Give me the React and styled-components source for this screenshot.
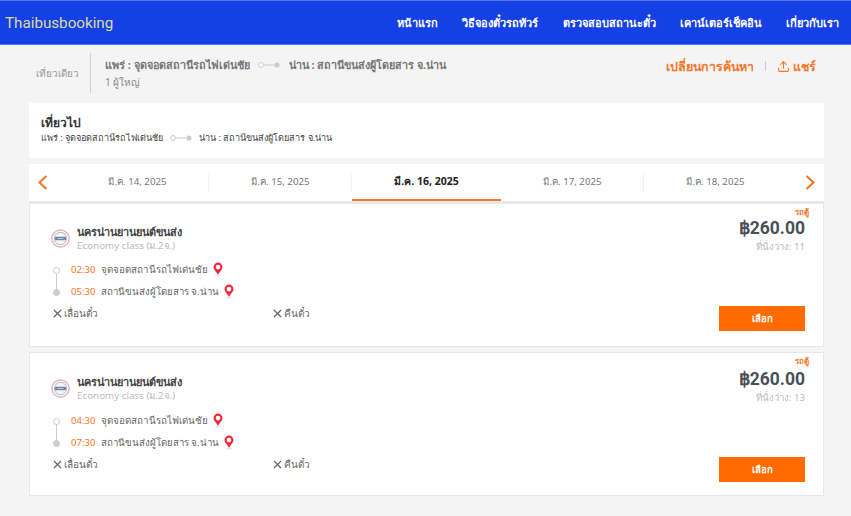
import React from "react";
import styled, { createGlobalStyle } from "styled-components";
import { Upload, X } from "lucide-react";

const GlobalStyle = createGlobalStyle`
  html, body { margin: 0; padding: 0; background: #f4f4f4; }
  body { font-family: "Noto Sans", "Liberation Sans", sans-serif; }
`;

const Page = styled.div`
  width: 851px;
  height: 516px;
  overflow: hidden;
  background: #f4f4f4;
`;

const Header = styled.header`
  height: 45px;
  box-sizing: border-box;
  display: flex;
  align-items: center;
  justify-content: space-between;
  padding: 0 12px 0 5px;
  background: #1540e6;
  border-top: 1px solid #5c78ee;
  border-bottom: 1px solid #5c78ee;
`;

const Logo = styled.div`
  font-family: "Roboto", sans-serif;
  font-size: 15.2px;
  color: #d9dc9c;
`;

const Nav = styled.nav`
  display: flex;
  gap: 24.25px;
  font-size: 11px;
  font-weight: 700;
  color: #fff;
`;

const Summary = styled.div`
  height: 58px;
  box-sizing: border-box;
  display: flex;
  justify-content: space-between;
  padding: 9px 35px 0 36px;
`;

const SummaryLeft = styled.div`
  display: flex;
  align-items: flex-start;
`;

const TripType = styled.div`
  width: 54px;
  height: 40px;
  margin-top: -1px;
  line-height: 40px;
  font-size: 10px;
  color: #999;
  border-right: 1px solid #c6d0d8;
  margin-right: 14px;
`;

const RouteLine = styled.div`
  display: flex;
  align-items: center;
  gap: ${(p) => p.$gap || 6}px;
  height: ${(p) => p.$height || 22}px;
  font-size: ${(p) => p.$size || 10}px;
  font-weight: ${(p) => p.$weight || 400};
  color: ${(p) => p.$color || "#777"};
`;

const Passengers = styled.div`
  margin-top: -1px;
  font-size: 10px;
  color: #888;
  line-height: 14px;
`;

const Connector = styled.svg`
  flex: none;
  width: 24px;
  height: 8px;
`;

const Actions = styled.div`
  display: flex;
  align-items: center;
  height: 24px;
  font-size: 12.4px;
  font-weight: 700;
  color: #f5772a;
`;

const ActionDivider = styled.span`
  width: 1px;
  height: 10px;
  margin: 0 11px;
  background: #ccc;
`;

const ShareIcon = styled(Upload)`
  width: 13px;
  height: 13px;
  margin-right: 3px;
`;

const Content = styled.main`
  width: 795px;
  margin-left: 29px;
`;

const TripPanel = styled.section`
  height: 55px;
  box-sizing: border-box;
  padding: 12px 12px 0;
  background: #fff;
`;

const TripTitle = styled.div`
  font-size: 12px;
  font-weight: 700;
  line-height: 15px;
  color: #333;
`;

const DateBar = styled.div`
  height: 39px;
  box-sizing: border-box;
  margin-top: 6px;
  display: flex;
  align-items: stretch;
  background: #fff;
  border-bottom: 2px solid #e8e8e8;
`;

const Arrow = styled.div`
  width: 37px;
  flex: none;
  display: flex;
  align-items: center;
  justify-content: ${(p) => (p.$right ? "flex-end" : "flex-start")};
  padding: 0 9px;
  box-sizing: border-box;
`;

const DateTabs = styled.div`
  flex: 1;
  display: flex;
`;

const DateTab = styled.div`
  flex: none;
  width: ${(p) => (p.$active ? 149 : 143)}px;
  box-sizing: border-box;
  display: flex;
  align-items: center;
  justify-content: center;
  height: 37px;
  padding-bottom: 2px;
  font-size: ${(p) => (p.$active ? 10.5 : 9.7)}px;
  font-weight: ${(p) => (p.$active ? 700 : 400)};
  color: ${(p) => (p.$active ? "#222" : "#777")};
  background: ${(p) =>
    p.$divider ? "linear-gradient(#eef0f2, #eef0f2) right center / 1px 18px no-repeat" : "none"};
  box-shadow: ${(p) => (p.$active ? "inset 0 -2px 0 #f5772a" : "none")};
`;

const Card = styled.article`
  height: ${(p) => p.$height}px;
  box-sizing: border-box;
  margin-bottom: 5px;
  padding: 3px 18px 0 21px;
  display: flex;
  justify-content: space-between;
  background: #fff;
  border: 1px solid #e8e8e8;
`;

const CardLeft = styled.div`
  padding-top: ${(p) => 17 + p.$shift}px;
`;

const Operator = styled.div`
  display: flex;
  align-items: center;
  gap: 7px;
  height: 28px;
`;

const OperatorName = styled.div`
  font-size: 10.9px;
  font-weight: 700;
  line-height: 14px;
  color: #444;
`;

const ClassName = styled.div`
  font-size: 9.8px;
  line-height: 13px;
  color: #bbb;
`;

const Stops = styled.div`
  position: relative;
  margin-top: ${(p) => 6 + p.$shift}px;
  padding-left: 20px;
`;

const StopLine = styled.span`
  position: absolute;
  left: 5px;
  top: 12px;
  width: 1px;
  height: 20px;
  background: #ccc;
`;

const StopDot = styled.span`
  position: absolute;
  left: 2px;
  top: ${(p) => p.$top}px;
  width: 7px;
  height: 7px;
  box-sizing: border-box;
  border-radius: 50%;
  border: 1px solid #ccc;
  background: ${(p) => (p.$filled ? "#ccc" : "#fff")};
`;

const Stop = styled.div`
  display: flex;
  align-items: center;
  gap: 5px;
  height: 22.5px;
  font-size: ${(p) => p.$size}px;
  color: #666;
`;

const StopTime = styled.span`
  font-size: 9.6px;
  color: #f5772a;
`;

const Policies = styled.div`
  display: flex;
  height: 22px;
  align-items: center;
  margin-top: -1px;
  font-size: 10px;
  color: #666;
`;

const Policy = styled.div`
  width: 220px;
  display: flex;
  align-items: center;
`;

const CardRight = styled.div`
  display: flex;
  flex-direction: column;
  align-items: flex-end;
`;

const Vehicle = styled.div`
  font-size: 8px;
  font-weight: 700;
  line-height: 10px;
  margin-right: -4px;
  color: #f5772a;
`;

const Price = styled.div`
  margin-top: ${(p) => p.$shift}px;
  font-family: "Roboto", sans-serif;
  font-size: 17.5px;
  font-weight: 700;
  line-height: 23px;
  color: #4a5058;
`;

const Seats = styled.div`
  font-size: 9.7px;
  line-height: 14px;
  color: #bbb;
`;

const SelectButton = styled.button`
  width: 86px;
  height: 25px;
  margin-top: 52px;
  padding: 0;
  border: none;
  background: #ff6b00;
  color: #fff;
  font-family: inherit;
  font-size: 9.5px;
  font-weight: 700;
`;

function RouteConnector({ color = "#ccc" }) {
  return (
    <Connector viewBox="0 0 24 8">
      <circle cx="4" cy="4" r="2.5" fill="#fff" stroke={color} />
      <path d="M7 4h13" stroke={color} />
      <circle cx="20" cy="4" r="2.5" fill={color} />
    </Connector>
  );
}

function DateArrow({ right }) {
  return (
    <svg width="10" height="15" viewBox="0 0 10 15">
      <path
        d={right ? "M1.5 1l7 6.5-7 6.5" : "M8.5 1l-7 6.5 7 6.5"}
        fill="none"
        stroke="#f5772a"
        strokeWidth="2.2"
      />
    </svg>
  );
}

function LogoMark() {
  return (
    <svg width="19" height="19" viewBox="0 0 19 19">
      <circle cx="9.5" cy="9.5" r="8.6" fill="#fff" stroke="#e8b2b6" strokeWidth="1.5" />
      <circle cx="9.5" cy="9.5" r="6.2" fill="#f3f5f8" stroke="#aab6c8" />
      <rect x="4" y="7.8" width="11" height="3.4" rx="1" fill="#6f83a6" />
      <path d="M6.5 9.5h6" stroke="#dfe5ee" strokeWidth="0.7" />
    </svg>
  );
}

function Pin() {
  return (
    <svg width="10" height="15" viewBox="0 0 10 15">
      <ellipse cx="5" cy="13.4" rx="3" ry="1" fill="#e4e4e4" />
      <path
        d="M5 .6A4.5 4.5 0 0 0 .5 5.1C.5 7.8 3.5 10 5 12.8 6.5 10 9.5 7.8 9.5 5.1A4.5 4.5 0 0 0 5 .6Z"
        fill="#ee2a3c"
      />
      <circle cx="5" cy="5.1" r="2.3" fill="#fff" />
    </svg>
  );
}

const dates = ["มี.ค. 14, 2025", "มี.ค. 15, 2025", "มี.ค. 16, 2025", "มี.ค. 17, 2025", "มี.ค. 18, 2025"];
const navItems = ["หน้าแรก", "วิธีจองตั๋วรถทัวร์", "ตรวจสอบสถานะตั๋ว", "เคาน์เตอร์เช็คอิน", "เกี่ยวกับเรา"];
const trips = [
  { depart: "02:30", arrive: "05:30", seats: 11, height: 144, headShift: 0, bodyShift: 0, priceShift: 0 },
  { depart: "04:30", arrive: "07:30", seats: 13, height: 144, headShift: 1, bodyShift: 1, priceShift: 2 },
];

export default function App() {
  return (
    <Page>
      <GlobalStyle />
      <Header>
        <Logo>Thaibusbooking</Logo>
        <Nav>
          {navItems.map((item) => (
            <span key={item}>{item}</span>
          ))}
        </Nav>
      </Header>
      <Summary>
        <SummaryLeft>
          <TripType>เที่ยวเดียว</TripType>
          <div>
            <RouteLine $weight={700} $size={10.8} $gap={7.5} $color="#777">
              แพร่ : จุดจอดสถานีรถไฟเด่นชัย
              <RouteConnector />
              น่าน : สถานีขนส่งผู้โดยสาร จ.น่าน
            </RouteLine>
            <Passengers>1 ผู้ใหญ่</Passengers>
          </div>
        </SummaryLeft>
        <Actions>
          เปลี่ยนการค้นหา
          <ActionDivider />
          <ShareIcon />
          แชร์
        </Actions>
      </Summary>
      <Content>
        <TripPanel>
          <TripTitle>เที่ยวไป</TripTitle>
          <RouteLine $size={9.1} $height={15} $color="#444">
            แพร่ : จุดจอดสถานีรถไฟเด่นชัย
            <RouteConnector />
            น่าน : สถานีขนส่งผู้โดยสาร จ.น่าน
          </RouteLine>
        </TripPanel>
        <DateBar>
          <Arrow>
            <DateArrow />
          </Arrow>
          <DateTabs>
            {dates.map((date, i) => (
              <DateTab key={date} $active={i === 2} $divider={i !== 2 && i !== 4}>
                {date}
              </DateTab>
            ))}
          </DateTabs>
          <Arrow $right>
            <DateArrow right />
          </Arrow>
        </DateBar>
        {trips.map((trip) => (
          <Card key={trip.depart} $height={trip.height}>
            <CardLeft $shift={trip.headShift}>
              <Operator>
                <LogoMark />
                <div>
                  <OperatorName>นครน่านยานยนต์ขนส่ง</OperatorName>
                  <ClassName>Economy class (ม.2จ.)</ClassName>
                </div>
              </Operator>
              <Stops $shift={trip.bodyShift}>
                <StopLine />
                <StopDot $top={9} />
                <StopDot $top={31} $filled />
                <Stop $size={9.8}>
                  <StopTime>{trip.depart}</StopTime>
                  จุดจอดสถานีรถไฟเด่นชัย
                  <Pin />
                </Stop>
                <Stop $size={9.7}>
                  <StopTime>{trip.arrive}</StopTime>
                  สถานีขนส่งผู้โดยสาร จ.น่าน
                  <Pin />
                </Stop>
              </Stops>
              <Policies>
                <Policy>
                  <X size={13} strokeWidth={2.2} />
                  เลื่อนตั๋ว
                </Policy>
                <Policy>
                  <X size={13} strokeWidth={2.2} />
                  คืนตั๋ว
                </Policy>
              </Policies>
            </CardLeft>
            <CardRight>
              <Vehicle>รถตู้</Vehicle>
              <Price $shift={trip.priceShift}>฿260.00</Price>
              <Seats>ที่นั่งว่าง: {trip.seats}</Seats>
              <SelectButton>เลือก</SelectButton>
            </CardRight>
          </Card>
        ))}
      </Content>
    </Page>
  );
}
